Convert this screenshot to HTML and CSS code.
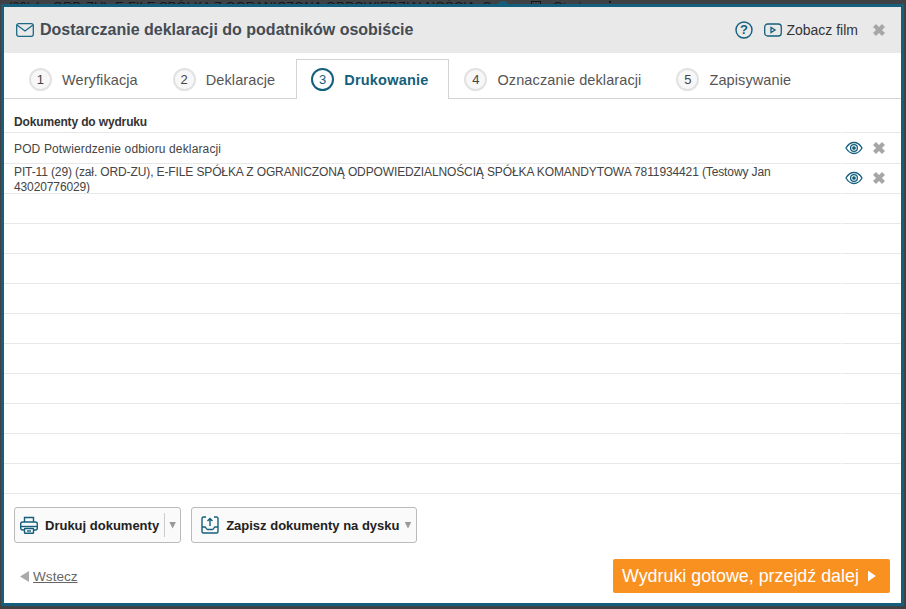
FILE: index.html
```html
<!DOCTYPE html>
<html lang="pl">
<head>
<meta charset="utf-8">
<title>Dostarczanie deklaracji</title>
<link rel="stylesheet" href="styles.css">
</head>
<body>
<div class="backdrop"><span class="bd-text">(29) (z. ORD-ZU), E-FILE SPÓŁKA Z OGRANICZONĄ ODPOWIEDZIALNOŚCIĄ, S</span><span class="bd-dot"></span><span class="bd-doc"></span><span class="bd-open">Otwórz</span><span class="bd-more"></span></div>
<main class="modal">
  <header class="head">
    <svg class="mail" width="18" height="14" viewBox="0 0 18 14" fill="none" stroke="#1d6a85" stroke-width="1.3"><rect x=".7" y=".7" width="16.6" height="12.6" rx="2"/><path d="M1 2l8 6 8-6"/></svg>
    <h1 class="title">Dostarczanie deklaracji do podatników osobiście</h1>
    <svg class="help" width="18" height="18" viewBox="0 0 18 18"><circle cx="9" cy="9" r="8" fill="none" stroke="#14607c" stroke-width="1.4"/><text x="9" y="13" text-anchor="middle" class="help-q">?</text></svg>
    <svg class="film" width="18" height="14" viewBox="0 0 18 14" fill="none" stroke="#14607c" stroke-width="1.3"><rect x=".7" y="1" width="16.6" height="12" rx="3"/><path d="M7 4.500v5l4-2.500z"/></svg>
    <span class="film-label">Zobacz film</span>
    <svg class="x" width="14" height="14" viewBox="0 0 14 14"><path d="M2.500 2.500l9 9M11.500 2.500l-9 9"/></svg>
  </header>
  <nav class="tabs">
    <div class="tab"><span class="num">1</span>Weryfikacja</div>
    <div class="tab"><span class="num">2</span>Deklaracje</div>
    <div class="tab active"><span class="num">3</span>Drukowanie</div>
    <div class="tab"><span class="num">4</span>Oznaczanie deklaracji</div>
    <div class="tab"><span class="num">5</span>Zapisywanie</div>
  </nav>
  <section class="list">
    <div class="list-head">Dokumenty do wydruku</div>
    <div class="row first"><div class="cell wide">POD Potwierdzenie odbioru deklaracji</div><div class="acts"><svg class="eye" width="18" height="14" viewBox="0 0 18 14" fill="none" stroke="#14607c" stroke-width="1.3"><path d="M1 7c2-3.500 5-5.500 8-5.500s6 2 8 5.500c-2 3.500-5 5.500-8 5.500S3 10.500 1 7z"/><circle cx="9" cy="7" r="3.400"/><circle cx="9" cy="7" r="1.200" fill="#14607c"/></svg><svg class="x" width="14" height="14" viewBox="0 0 14 14"><path d="M2.500 2.500l9 9M11.500 2.500l-9 9"/></svg></div></div>
    <div class="row"><div class="cell tight">PIT-11 (29) (zał. ORD-ZU), E-FILE SPÓŁKA Z OGRANICZONĄ ODPOWIEDZIALNOŚCIĄ SPÓŁKA KOMANDYTOWA 7811934421 (Testowy Jan 43020776029)</div><div class="acts"><svg class="eye" width="18" height="14" viewBox="0 0 18 14" fill="none" stroke="#14607c" stroke-width="1.3"><path d="M1 7c2-3.500 5-5.500 8-5.500s6 2 8 5.500c-2 3.500-5 5.500-8 5.500S3 10.500 1 7z"/><circle cx="9" cy="7" r="3.400"/><circle cx="9" cy="7" r="1.200" fill="#14607c"/></svg><svg class="x" width="14" height="14" viewBox="0 0 14 14"><path d="M2.500 2.500l9 9M11.500 2.500l-9 9"/></svg></div></div>
    <div class="row"><div class="cell"></div><div class="acts"></div></div>
    <div class="row"><div class="cell"></div><div class="acts"></div></div>
    <div class="row"><div class="cell"></div><div class="acts"></div></div>
    <div class="row"><div class="cell"></div><div class="acts"></div></div>
    <div class="row"><div class="cell"></div><div class="acts"></div></div>
    <div class="row"><div class="cell"></div><div class="acts"></div></div>
    <div class="row"><div class="cell"></div><div class="acts"></div></div>
    <div class="row"><div class="cell"></div><div class="acts"></div></div>
    <div class="row"><div class="cell"></div><div class="acts"></div></div>
    <div class="row"><div class="cell"></div><div class="acts"></div></div>
  </section>
  <div class="tools">
    <button class="btn print">
      <svg width="18" height="18" viewBox="0 0 18 18" fill="none" stroke="#14607c" stroke-width="1.4"><path d="M4.500 6V1.500h9V6"/><rect x=".7" y="6" width="16.600" height="8" rx="2"/><path d="M1 10.500h16"/><rect x="4.500" y="12.500" width="9" height="4.800" rx=".5" fill="#fafafa"/><path d="M7 15h4"/></svg>
      <span class="btn-label">Drukuj dokumenty</span><span class="sep"></span><span class="caret"></span>
    </button>
    <button class="btn save">
      <svg width="18" height="18" viewBox="0 0 18 18" fill="none" stroke="#14607c" stroke-width="1.4"><path d="M5 1H2.500A1.500 1.500 0 0 0 1 2.500v13A1.500 1.500 0 0 0 2.500 17h13a1.500 1.500 0 0 0 1.500-1.500v-13A1.500 1.500 0 0 0 15.500 1H13"/><path d="M1 11h3c1 0 1 2.500 2.500 2.500h5c1.500 0 1.500-2.500 2.500-2.500h3"/><path d="M9 10V2.500M6.500 5 9 2.500 11.500 5"/></svg>
      <span class="btn-label">Zapisz dokumenty na dysku</span><span class="caret"></span>
    </button>
  </div>
  <footer class="foot">
    <span class="back"><span class="back-arrow"></span><a class="back-link">Wstecz</a></span>
    <button class="next">Wydruki gotowe, przejdź dalej<span class="next-arrow"></span></button>
  </footer>
</main>
</body>
</html>
```
FILE: styles.css
```css
html, body { margin: 0; height: 100%; }
body {
  width: 906px; height: 609px; overflow: hidden; position: relative;
  background: #3f4144;
  font-family: "Liberation Sans", Arial, sans-serif;
  padding: 4px 0 0 1px; box-sizing: border-box;
}
.backdrop {
  position: absolute; left: 8px; top: 0; white-space: nowrap;
  display: flex; align-items: flex-start; font-size: 13px; line-height: 14px; color: #16191c;
}
.bd-text { flex: none; width: 489px; }
.bd-dot { flex: none; width: 12px; height: 12px; margin-top: 1px; border-radius: 50%; background: #14607c; }
.bd-doc { flex: none; width: 10px; height: 12px; margin: 1px 0 0 22px; border: 1px solid #16191c; box-sizing: border-box; }
.bd-open { flex: none; margin-left: 12px; }
.bd-more { flex: none; width: 2px; height: 2px; margin: 1px 0 0 15px; background: #16191c; }
.modal {
  position: relative; width: 903px; height: 602px; box-sizing: border-box;
  border: 3px solid #14607c;
  background: #fff; display: flex; flex-direction: column;
}
.head {
  height: 46px; flex: none; background: #e9e9e9;
  display: flex; align-items: center; padding: 0 15px 0 12px;
}
.mail { margin-right: 6px; }
.title { flex: 1; margin: 0; font-size: 16px; font-weight: 700; color: #444c54; }
.help { margin-right: 11px; }
.help-q { font: 700 13px "Liberation Sans", sans-serif; fill: #14607c; }
.film { margin-right: 4px; }
.film-label { font-size: 14px; color: #333; margin-right: 14px; }
.x { fill: none; stroke: #a6a6a6; stroke-width: 4.200; flex: none; }
.tabs {
  height: 46px; flex: none; display: flex; align-items: flex-end;
  border-bottom: 1px solid #d3d3d3; padding-left: 10px; box-sizing: border-box;
}
.tab {
  height: 39px; display: flex; align-items: center; box-sizing: border-box;
  padding: 0 20px 0 15px; font-size: 14.500px; letter-spacing: .1px; color: #555;
  white-space: nowrap; margin-bottom: -1px;
}
.tab.active {
  border: 1px solid #d3d3d3; border-bottom: 0; background: #fff; letter-spacing: .2px;
  font-weight: 700; color: #14607c; height: 40px; padding: 0 20px 0 14px; margin-left: 1px;
}
.num {
  width: 19px; height: 19px; border-radius: 50%; border: 2px solid #e2e2e2;
  background: #f7f7f7; display: flex; align-items: center; justify-content: center;
  font-size: 13px; font-weight: 400; color: #444; margin-right: 10px; flex: none;
}
.active .num { border-color: #14607c; background: #fff; color: #14607c; }
.list { flex: none; }
.list-head {
  height: 33px; box-sizing: border-box; padding: 16px 10px 0;
  font-size: 12px; font-weight: 700; color: #333; line-height: 14px; letter-spacing: -.15px;
}
.row { display: flex; height: 30px; box-sizing: border-box; }
.row.first { height: 31px; }
.cell, .acts { border-top: 1px solid #e8e8e8; box-sizing: border-box; }
.cell { flex: 1; font-size: 12px; line-height: 15px; color: #444; padding: 2px 62px 0 10px; display: flex; align-items: center; }
.cell.wide { letter-spacing: .14px; }
.cell.tight { letter-spacing: -.12px; }
.acts { width: 59px; flex: none; margin-left: 1px; display: flex; align-items: center; padding: 0 0 1px 3px; }
.first .acts { padding-bottom: 0; }
.eye { margin-right: 9px; flex: none; }
.tools { flex: none; display: flex; gap: 10px; padding: 13px 10px 0; height: 66px; align-items: flex-start; border-top: 1px solid #e8e8e8; box-sizing: border-box; }
.btn {
  height: 36px; padding: 0 4px 0 5px; border: 1px solid #bbb; border-radius: 3px; background: #fafafa;
  display: flex; align-items: center; font: 700 13px "Liberation Sans", sans-serif; color: #222;
}
.save { padding-left: 9px; }
.btn-label { margin-left: 7px; }
.sep { width: 1px; height: 24px; background: #ccc; margin-left: 5px; }
.caret { width: 7px; height: 7px; background: #999; clip-path: polygon(0 0, 100% 0, 50% 100%); margin-left: 4px; }
.save .caret { margin-left: 5px; }
.foot { flex: 1; display: flex; justify-content: space-between; align-items: flex-start; padding: 0 11px 0 16px; }
.back { display: flex; align-items: center; font-size: 13.600px; color: #666; margin-top: 10px; }
.back-arrow { width: 9px; height: 11px; background: #aaa; clip-path: polygon(100% 0, 100% 100%, 0 50%); margin-right: 4px; }
.back-link { text-decoration: underline; }
.next {
  height: 34px; width: 277px; border: 0; border-radius: 2px; background: #f99120; color: #fff;
  font: 400 17.850px "Liberation Sans", sans-serif; display: flex; align-items: center; padding: 0 0 0 9px;
}
.next-arrow { width: 8px; height: 11px; background: #fff; clip-path: polygon(0 0, 100% 50%, 0 100%); margin-left: 9px; }
```
